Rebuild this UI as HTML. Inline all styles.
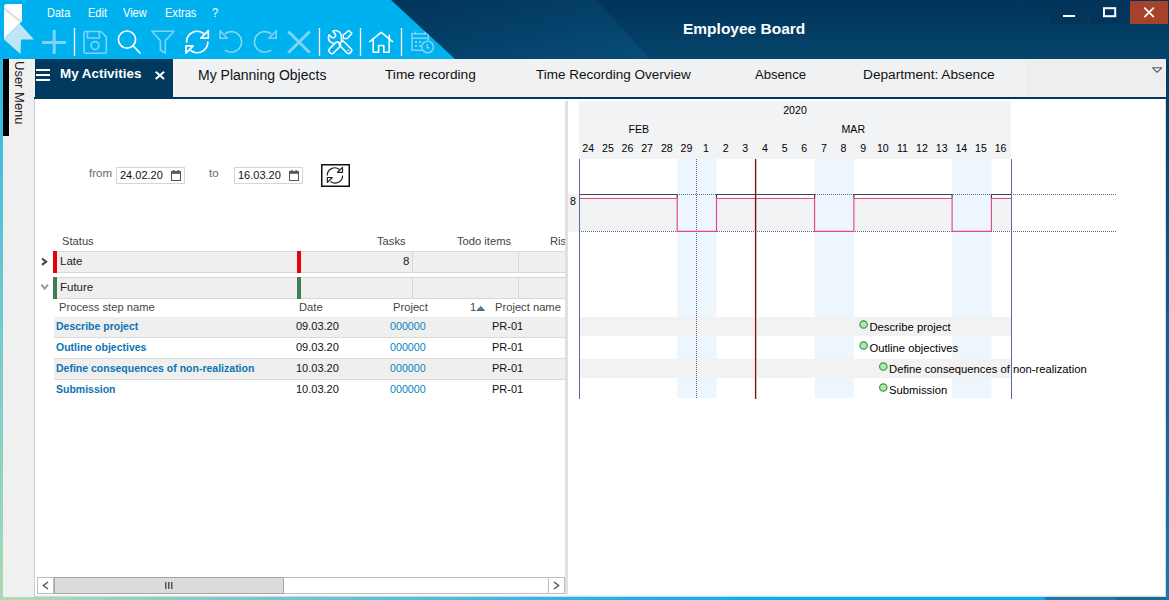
<!DOCTYPE html>
<html><head><meta charset="utf-8">
<style>
*{margin:0;padding:0;box-sizing:border-box}
html,body{width:1169px;height:600px;overflow:hidden}
body{position:relative;font-family:"Liberation Sans",sans-serif;background:linear-gradient(90deg,#b2dcb0 0%,#74c9cf 22%,#4cc0e0 36%,#12b3ee 55%,#00b0f0 68%,#00b0f0 89.3%,#1b7aaa 89.5%,#1b7aaa 95.3%,#156a9a 95.5%)}
.a{position:absolute}
.t{position:absolute;white-space:nowrap;line-height:1}
#leftedge{left:0;top:59px;width:3px;height:541px;background:linear-gradient(180deg,#2ab8e6 0%,#6ec8d0 45%,#a9d9b3 100%)}
#rightedge{left:1166px;top:59px;width:3px;height:541px;background:linear-gradient(180deg,#003a5e 0%,#0f5a8a 40%,#1a78a8 100%)}
#header{left:0;top:0;width:1169px;height:59px;background:#003a5e;overflow:hidden}
#win{left:3px;top:59px;width:1163px;height:538px;background:#fff}
</style></head><body>
<div id="leftedge" class="a"></div>
<div id="rightedge" class="a"></div>

<!-- HEADER -->
<svg class="a" style="left:0;top:0" width="1169" height="59">
  <defs>
    <linearGradient id="nv" x1="0" y1="0" x2="0" y2="1">
      <stop offset="0" stop-color="#01345a"/>
      <stop offset="1" stop-color="#05446c"/>
    </linearGradient>
    <linearGradient id="bd" x1="0" y1="0" x2="1" y2="1">
      <stop offset="0" stop-color="#02345a"/>
      <stop offset="1" stop-color="#074d78"/>
    </linearGradient>
    <linearGradient id="lg" x1="0" y1="0" x2="1" y2="1">
      <stop offset="0" stop-color="#cfcfcf"/>
      <stop offset="1" stop-color="#ffffff"/>
    </linearGradient>
    <clipPath id="cyanclip"><polygon points="0,0 391,0 455,59 0,59"/></clipPath>
  </defs>
  <rect x="0" y="0" width="1169" height="59" fill="url(#nv)"/>
  <polygon points="391,0 596,0 650,59 455,59" fill="url(#bd)"/>
  <polygon points="0,0 391,0 455,59 0,59" fill="#00b1f0"/>
  <!-- logo -->
  <path d="M4,7 Q4,4 7,4 H22 V21 L19.5,23.5 L4,38.5 Z" fill="#ffffff"/>
  <linearGradient id="lgr" gradientUnits="userSpaceOnUse" x1="12.9" y1="14.1" x2="10.9" y2="16.6"><stop offset="0" stop-color="#cdcdcd"/><stop offset="1" stop-color="#ffffff"/></linearGradient><polygon points="4,7 21.8,21.2 19.5,23.5 4,12" fill="url(#lgr)"/>
  <polygon points="4,38.5 19.5,23.5 34,39.5 21,39.5 20.5,54 4,39.5" fill="#bde6f7"/>
  <!-- plus (faded) -->
  <g stroke="#7fd4f6" stroke-width="3" fill="none">
    <line x1="42" y1="42.5" x2="66" y2="42.5"/>
    <line x1="54.2" y1="30" x2="54.2" y2="54"/>
  </g>
  <!-- separators -->
  <g stroke="#ffffff" stroke-width="1.3">
    <line x1="74.5" y1="28" x2="74.5" y2="56"/>
    <line x1="319.5" y1="28" x2="319.5" y2="56"/>
    <line x1="360.5" y1="28" x2="360.5" y2="56"/>
    <line x1="401.5" y1="28" x2="401.5" y2="56"/>
  </g>
  <!-- save faded -->
  <g stroke="#7fd4f6" stroke-width="1.6" fill="none" stroke-linejoin="round">
    <path d="M85.5,31.5 H101 L106.3,37 V52 Q106.3,53.2 105.1,53.2 H85.2 Q84,53.2 84,52 V33 Q84,31.5 85.5,31.5 Z"/>
    <path d="M87.5,31.5 V38 H99.4 V31.5"/>
    <circle cx="95" cy="45.5" r="3.9"/>
  </g>
  <!-- search -->
  <g stroke="#ffffff" stroke-width="1.7" fill="none" stroke-linecap="round">
    <circle cx="127" cy="39.6" r="8.6"/>
    <line x1="133.3" y1="46" x2="140" y2="53"/>
  </g>
  <!-- filter faded -->
  <path d="M152,31.2 H174 L165.3,40.8 V53.2 L160.4,50 V40.8 Z" stroke="#7fd4f6" stroke-width="1.6" fill="none" stroke-linejoin="round"/>
  <!-- refresh -->
  <g stroke="#ffffff" stroke-width="1.7" fill="none" stroke-linejoin="round" stroke-linecap="round">
    <path d="M186.6,42 A10.6,10.6 0 0 1 203.3,33.3"/>
    <path d="M207.8,42 A10.6,10.6 0 0 1 191.1,50.7"/>
    <path d="M208.3,30.7 V38.2 H200.8 Z"/>
    <path d="M186,53.2 V45.9 H193.2 Z"/>
  </g>
  <!-- undo faded -->
  <g stroke="#7fd4f6" stroke-width="1.6" fill="none" stroke-linejoin="round" stroke-linecap="round">
    <path d="M225.4,33.5 A10.3,10.3 0 1 1 225.4,50.3"/>
    <path d="M220,30.7 V38.2 H227.4 Z"/>
  </g>
  <!-- redo faded -->
  <g stroke="#7fd4f6" stroke-width="1.6" fill="none" stroke-linejoin="round" stroke-linecap="round">
    <path d="M270.7,33.5 A10.3,10.3 0 1 0 270.7,50.3"/>
    <path d="M276.2,30.7 V38.2 H268.8 Z"/>
  </g>
  <!-- X faded -->
  <g stroke="#7fd4f6" stroke-width="3" stroke-linecap="butt">
    <line x1="288.3" y1="31.5" x2="309.8" y2="52.8"/>
    <line x1="309.8" y1="31.5" x2="288.3" y2="52.8"/>
  </g>
  <!-- tools -->
  <g stroke="#ffffff" stroke-width="1.5" fill="none" stroke-linejoin="round">
    <path d="M332.6,31.3 L335.4,34.1 L335.6,36.3 L334,37.7 L331.8,37.4 L329,34.7 Q327.6,38.6 329.6,41.3 Q331.6,43.4 335,43.6 M332.6,31.3 Q336.3,29.6 339.4,32.1 Q342.2,35.2 341.2,39.6"/>
    <rect x="-6.6" y="-2.9" width="13.2" height="5.8" rx="2.2" transform="translate(334.6,47.8) rotate(-45)"/>
    <rect x="-7" y="-2.9" width="14" height="5.8" rx="2.2" transform="translate(345.6,47.4) rotate(45)"/>
    <path d="M343.3,38.5 L343.2,35 L348.8,30.6 L351.9,33.2 L347.4,38.5 Z"/>
  </g>
  <circle cx="342" cy="40.5" r="1.3" fill="#fff"/>
  <circle cx="348.3" cy="50.2" r="0.8" fill="#fff"/>
  <!-- home -->
  <g stroke="#ffffff" stroke-width="1.55" fill="none" stroke-linejoin="round" stroke-linecap="round">
    <path d="M369.8,41.6 L381.2,32.4 L392.6,41.6"/>
    <path d="M373.2,39 V52.2 H378.6 V45.5 H383.8 V52.2 H389.2 V39"/>
    <path d="M389.3,35.3 V38.5"/>
  </g>
  <!-- calendar faded (clipped) -->
  <g clip-path="url(#cyanclip)">
    <g stroke="#7fd4f6" stroke-width="1.5" fill="none">
      <path d="M422,50.3 H412 V33.8 H428.3 V40.5"/>
      <line x1="412" y1="38.3" x2="428.3" y2="38.3"/>
      <line x1="415.5" y1="31.5" x2="415.5" y2="34.5"/>
      <line x1="425" y1="31.5" x2="425" y2="34.5"/>
      <circle cx="427.6" cy="47" r="5.8"/>
      <path d="M427.3,44 V47.8 H429.5"/>
    </g>
    <g fill="#7fd4f6">
      <rect x="415" y="41" width="2" height="2"/><rect x="419" y="41" width="2" height="2"/>
      <rect x="415" y="45" width="2" height="2"/><rect x="419" y="45" width="2" height="2"/>
    </g>
  </g>
  <!-- window controls -->
  <rect x="1050" y="1" width="38" height="23" fill="#03355a"/>
  <rect x="1090" y="1" width="38" height="23" fill="#03355a"/>
  <rect x="1130" y="1" width="38" height="23" fill="#a5422b"/>
  <rect x="1063" y="15" width="12" height="2" fill="#fff"/>
  <rect x="1104" y="8.2" width="11.2" height="8" fill="none" stroke="#fff" stroke-width="2"/>
  <g stroke="#fff" stroke-width="1.8"><line x1="1144.3" y1="7.6" x2="1153.8" y2="17.2"/><line x1="1153.8" y1="7.6" x2="1144.3" y2="17.2"/></g>
</svg>
<div class="t" style="left:46.8px;top:7px;font-size:12px;color:#fff;transform:scaleX(0.92);transform-origin:0 0">Data</div>
<div class="t" style="left:87.5px;top:7px;font-size:12px;color:#fff;transform:scaleX(0.92);transform-origin:0 0">Edit</div>
<div class="t" style="left:123px;top:7px;font-size:12px;color:#fff;transform:scaleX(0.92);transform-origin:0 0">View</div>
<div class="t" style="left:165px;top:7px;font-size:12px;color:#fff;transform:scaleX(0.92);transform-origin:0 0">Extras</div>
<div class="t" style="left:212px;top:7px;font-size:12px;color:#fff;transform:scaleX(0.92);transform-origin:0 0">?</div>
<div class="t" style="left:683px;top:21px;font-size:15.5px;font-weight:bold;color:#fff">Employee Board</div>

<!-- WINDOW BODY -->
<div class="a" style="left:3px;top:59px;width:1163px;height:538px;background:#fff"></div>
<!-- user menu sidebar -->
<div class="a" style="left:3px;top:59px;width:32px;height:538px;background:#f0f0f0"></div>
<div class="a" style="left:3px;top:59px;width:6px;height:77px;background:#000"></div>
<div class="t" style="left:11px;top:61px;font-size:13px;color:#222;transform-origin:0 0;transform:translate(15px,0) rotate(90deg)">User Menu</div>
<div class="a" style="left:34px;top:99px;width:1px;height:498px;background:#c9cde0"></div>
<!-- tab bar -->
<div class="a" style="left:35px;top:59px;width:1131px;height:38px;background:#f0f1f3"></div>
<div class="a" style="left:34px;top:97px;width:1132px;height:2px;background:#013a5e"></div>
<div class="a" style="left:35px;top:59px;width:138px;height:39px;background:#013a5e"></div>
<div class="a" style="left:36px;top:69px;width:14px;height:2px;background:#fff"></div>
<div class="a" style="left:36px;top:74px;width:14px;height:2px;background:#fff"></div>
<div class="a" style="left:36px;top:79px;width:14px;height:2px;background:#fff"></div>
<div class="t" style="left:60px;top:67px;font-size:13.4px;font-weight:bold;color:#fff">My Activities</div>
<svg class="a" style="left:150px;top:66px" width="20" height="20"><g stroke="#fff" stroke-width="2"><line x1="5.7" y1="5.7" x2="14.1" y2="12.9"/><line x1="14.1" y1="5.7" x2="5.7" y2="12.9"/></g></svg>
<div class="t" style="left:198px;top:68px;font-size:14px;color:#111">My Planning Objects</div>
<div class="t" style="left:385px;top:68px;font-size:13.7px;color:#111">Time recording</div>
<div class="t" style="left:536px;top:68px;font-size:13.5px;color:#111">Time Recording Overview</div>
<div class="t" style="left:755px;top:68px;font-size:13.1px;color:#111">Absence</div>
<div class="t" style="left:863px;top:68px;font-size:13.7px;color:#111">Department: Absence</div>
<div class="a" style="left:1026px;top:59px;width:140px;height:38px;background:#eeeeee"></div>
<svg class="a" style="left:1150px;top:64px" width="14" height="12"><path d="M2.6,3.8 H11.6 L7.1,8.3 Z" fill="none" stroke="#505560" stroke-width="1.05" stroke-linejoin="round"/></svg>


<!-- LEFT PANEL -->
<div class="t" style="left:89px;top:168px;font-size:11.5px;color:#666">from</div>
<div class="a" style="left:116px;top:167px;width:69px;height:17px;border:1px solid #d5d5d5;background:#fff"></div>
<div class="t" style="left:120px;top:170px;font-size:11px;color:#111">24.02.20</div>
<div class="t" style="left:209px;top:168px;font-size:11.5px;color:#666">to</div>
<div class="a" style="left:234px;top:167px;width:69px;height:17px;border:1px solid #d5d5d5;background:#fff"></div>
<div class="t" style="left:238px;top:170px;font-size:11px;color:#111">16.03.20</div>
<svg class="a" style="left:170px;top:169px" width="13" height="14"><rect x="1.5" y="3" width="9" height="8.5" fill="none" stroke="#555" stroke-width="1"/><rect x="1" y="2.2" width="10" height="2.6" fill="#555"/><rect x="2.4" y="1.2" width="2.6" height="2" rx="0.9" fill="#555"/><rect x="7" y="1.2" width="2.6" height="2" rx="0.9" fill="#555"/></svg>
<svg class="a" style="left:288px;top:169px" width="13" height="14"><rect x="1.5" y="3" width="9" height="8.5" fill="none" stroke="#555" stroke-width="1"/><rect x="1" y="2.2" width="10" height="2.6" fill="#555"/><rect x="2.4" y="1.2" width="2.6" height="2" rx="0.9" fill="#555"/><rect x="7" y="1.2" width="2.6" height="2" rx="0.9" fill="#555"/></svg>
<svg class="a" style="left:321px;top:164px" width="29" height="23"><rect x="0.75" y="0.75" width="27.5" height="21.5" fill="#fff" stroke="#111" stroke-width="1.5"/></svg>
<svg class="a" style="left:321px;top:164px" width="29" height="23"><g stroke="#222" stroke-width="1.2" fill="none" stroke-linejoin="round">
<path d="M327.3,175.5 A7.5,7.5 0 0 1 339.5,169.5" transform="translate(-321,-164)"/>
<path d="M342.6,175.5 A7.5,7.5 0 0 1 330.5,181.5" transform="translate(-321,-164)"/>
<path d="M342.5,167.4 V172.3 H337.5 Z" transform="translate(-321,-164)"/>
<path d="M327.4,182.4 V177.5 H332.4 Z" transform="translate(-321,-164)"/>
</g></svg>

<!-- group table -->
<div class="t" style="left:62px;top:236px;font-size:11.2px;color:#444">Status</div>
<div class="t" style="left:377px;top:236px;font-size:11.2px;color:#444">Tasks</div>
<div class="t" style="left:457px;top:236px;font-size:11.2px;color:#444">Todo items</div>
<div class="t" style="left:550px;top:236px;font-size:11.2px;color:#444">Ris</div>
<!-- Late row -->
<div class="a" style="left:57px;top:251px;width:508px;height:22px;background:#efefef;border-top:1px solid #d8d8d8;border-bottom:1px solid #d8d8d8"></div>
<div class="a" style="left:53px;top:251px;width:4px;height:22px;background:#e8000b"></div>
<div class="a" style="left:297px;top:251px;width:4px;height:22px;background:#e8000b"></div>
<div class="a" style="left:412px;top:252px;width:1px;height:20px;background:#d8d8d8"></div>
<div class="a" style="left:518px;top:252px;width:1px;height:20px;background:#d8d8d8"></div>
<div class="t" style="left:60px;top:256px;font-size:11.5px;color:#222">Late</div>
<div class="t" style="left:403px;top:256px;font-size:11.5px;color:#222">8</div>
<svg class="a" style="left:38px;top:255px" width="12" height="14"><path d="M4,3.5 L8.2,6.7 L4,9.9" fill="none" stroke="#484848" stroke-width="2.1"/></svg>
<!-- Future row -->
<div class="a" style="left:57px;top:277px;width:508px;height:22px;background:#efefef;border-top:1px solid #d8d8d8;border-bottom:1px solid #d8d8d8"></div>
<div class="a" style="left:53px;top:277px;width:4px;height:22px;background:#3d7f50"></div>
<div class="a" style="left:297px;top:277px;width:4px;height:22px;background:#3d7f50"></div>
<div class="a" style="left:412px;top:278px;width:1px;height:20px;background:#d8d8d8"></div>
<div class="a" style="left:518px;top:278px;width:1px;height:20px;background:#d8d8d8"></div>
<div class="t" style="left:60px;top:282px;font-size:11.5px;color:#222">Future</div>
<svg class="a" style="left:38px;top:281px" width="12" height="14"><path d="M3.4,3.6 L6.7,7.6 L10,3.6" fill="none" stroke="#9a9a9a" stroke-width="2.1"/></svg>
<!-- process step header -->
<div class="t" style="left:59px;top:302px;font-size:11.2px;color:#444">Process step name</div>
<div class="t" style="left:299px;top:302px;font-size:11.2px;color:#444">Date</div>
<div class="t" style="left:393px;top:302px;font-size:11.2px;color:#444">Project</div>
<div class="t" style="left:470px;top:302px;font-size:11.2px;color:#444">1</div>
<svg class="a" style="left:476px;top:303px" width="10" height="10"><path d="M1,7.5 H8.5 L4.75,3.5 Z" fill="#2a8ad0" stroke="#222" stroke-width="0.6"/></svg>
<div class="t" style="left:495px;top:302px;font-size:11.2px;color:#444">Project name</div>
<!-- data rows -->
<div class="a" style="left:54px;top:317px;width:511px;height:21px;background:#efefef;border-bottom:1px solid #dadada"></div>
<div class="a" style="left:54px;top:338px;width:511px;height:21px;background:#fff;border-bottom:1px solid #dadada"></div>
<div class="a" style="left:54px;top:359px;width:511px;height:21px;background:#efefef;border-bottom:1px solid #dadada"></div>
<div class="t" style="left:56px;top:321px;font-size:10.5px;font-weight:bold;color:#0e74b2">Describe project</div>
<div class="t" style="left:56px;top:342px;font-size:10.5px;font-weight:bold;color:#0e74b2">Outline objectives</div>
<div class="t" style="left:56px;top:363px;font-size:10.5px;font-weight:bold;color:#0e74b2">Define consequences of non-realization</div>
<div class="t" style="left:56px;top:384px;font-size:10.5px;font-weight:bold;color:#0e74b2">Submission</div>
<div class="t" style="left:296px;top:321px;font-size:11px;color:#111">09.03.20</div>
<div class="t" style="left:296px;top:342px;font-size:11px;color:#111">09.03.20</div>
<div class="t" style="left:296px;top:363px;font-size:11px;color:#111">10.03.20</div>
<div class="t" style="left:296px;top:384px;font-size:11px;color:#111">10.03.20</div>
<div class="t" style="left:390px;top:321px;font-size:10.7px;color:#0a84c4">000000</div>
<div class="t" style="left:390px;top:342px;font-size:10.7px;color:#0a84c4">000000</div>
<div class="t" style="left:390px;top:363px;font-size:10.7px;color:#0a84c4">000000</div>
<div class="t" style="left:390px;top:384px;font-size:10.7px;color:#0a84c4">000000</div>
<div class="t" style="left:492px;top:321px;font-size:11px;color:#111">PR-01</div>
<div class="t" style="left:492px;top:342px;font-size:11px;color:#111">PR-01</div>
<div class="t" style="left:492px;top:363px;font-size:11px;color:#111">PR-01</div>
<div class="t" style="left:492px;top:384px;font-size:11px;color:#111">PR-01</div>

<!-- scrollbar -->
<div class="a" style="left:37px;top:577px;width:528px;height:17px;border:1px solid #bdbdbd;background:#fff"></div>
<div class="a" style="left:53px;top:577px;width:1px;height:17px;background:#bdbdbd"></div>
<div class="a" style="left:548px;top:577px;width:1px;height:17px;background:#bdbdbd"></div>
<div class="a" style="left:54px;top:577px;width:230px;height:17px;border:1px solid #a5a5a5;background:#dcdcdc"></div>
<svg class="a" style="left:37px;top:577px" width="528" height="17">
<path d="M11,5 L6.3,8.5 L11,12" fill="none" stroke="#555" stroke-width="1.4"/>
<path d="M517,5 L521.7,8.5 L517,12" fill="none" stroke="#555" stroke-width="1.4"/>
<rect x="128" y="5" width="1.5" height="7" fill="#555"/><rect x="131" y="5" width="1.5" height="7" fill="#555"/><rect x="134" y="5" width="1.5" height="7" fill="#555"/>
</svg>

<div class="a" style="left:1165px;top:99px;width:1px;height:498px;background:#dcd8e0"></div>
<div class="a" style="left:35px;top:596px;width:1131px;height:1px;background:#dcd8de"></div>
<div class="a" style="left:35px;top:595px;width:1130px;height:1px;background:#f3f2f4"></div>
<!-- splitter -->
<div class="a" style="left:565px;top:101px;width:3px;height:493px;background:#e3dde6"></div>
<!-- GANTT -->
<svg class="a" style="left:568px;top:99px" width="598" height="495"><g transform="translate(-568,-99)" font-family="Liberation Sans" >
<rect x="579" y="101" width="432" height="58" fill="#f2f3f5"/>
<text x="795" y="114" font-size="10.6" text-anchor="middle" fill="#000">2020</text>
<text x="628.5" y="133" font-size="10.6" fill="#000">FEB</text>
<text x="841.5" y="133" font-size="10.6" fill="#000">MAR</text>
<text x="588.2" y="152" font-size="10.6" text-anchor="middle" fill="#000">24</text>
<text x="607.9" y="152" font-size="10.6" text-anchor="middle" fill="#000">25</text>
<text x="627.5" y="152" font-size="10.6" text-anchor="middle" fill="#000">26</text>
<text x="647.1" y="152" font-size="10.6" text-anchor="middle" fill="#000">27</text>
<text x="666.8" y="152" font-size="10.6" text-anchor="middle" fill="#000">28</text>
<text x="686.4" y="152" font-size="10.6" text-anchor="middle" fill="#000">29</text>
<text x="706.0" y="152" font-size="10.6" text-anchor="middle" fill="#000">1</text>
<text x="725.7" y="152" font-size="10.6" text-anchor="middle" fill="#000">2</text>
<text x="745.3" y="152" font-size="10.6" text-anchor="middle" fill="#000">3</text>
<text x="764.9" y="152" font-size="10.6" text-anchor="middle" fill="#000">4</text>
<text x="784.6" y="152" font-size="10.6" text-anchor="middle" fill="#000">5</text>
<text x="804.2" y="152" font-size="10.6" text-anchor="middle" fill="#000">6</text>
<text x="823.9" y="152" font-size="10.6" text-anchor="middle" fill="#000">7</text>
<text x="843.5" y="152" font-size="10.6" text-anchor="middle" fill="#000">8</text>
<text x="863.1" y="152" font-size="10.6" text-anchor="middle" fill="#000">9</text>
<text x="882.8" y="152" font-size="10.6" text-anchor="middle" fill="#000">10</text>
<text x="902.4" y="152" font-size="10.6" text-anchor="middle" fill="#000">11</text>
<text x="922.0" y="152" font-size="10.6" text-anchor="middle" fill="#000">12</text>
<text x="941.7" y="152" font-size="10.6" text-anchor="middle" fill="#000">13</text>
<text x="961.3" y="152" font-size="10.6" text-anchor="middle" fill="#000">14</text>
<text x="980.9" y="152" font-size="10.6" text-anchor="middle" fill="#000">15</text>
<text x="1000.6" y="152" font-size="10.6" text-anchor="middle" fill="#000">16</text>
<rect x="677.2" y="159" width="39.3" height="239" fill="#eef6fd"/>
<rect x="814.6" y="159" width="39.3" height="239" fill="#eef6fd"/>
<rect x="952.1" y="159" width="39.3" height="239" fill="#eef6fd"/>
<rect x="568" y="194" width="11" height="38" fill="#f2f3f5"/>
<text x="573" y="205" font-size="10.6" text-anchor="middle" fill="#000">8</text>
<rect x="579.0" y="198.5" width="98.2" height="32.5" fill="#f2f3f5"/>
<rect x="716.5" y="198.5" width="98.2" height="32.5" fill="#f2f3f5"/>
<rect x="853.9" y="198.5" width="98.2" height="32.5" fill="#f2f3f5"/>
<rect x="991.4" y="198.5" width="19.6" height="32.5" fill="#f2f3f5"/>
<rect x="580" y="317" width="431" height="19" fill="#f2f2f2"/><rect x="754" y="317" width="3" height="19" fill="#fff"/>
<rect x="580" y="359" width="431" height="19" fill="#f2f2f2"/><rect x="754" y="359" width="3" height="19" fill="#fff"/>
<g stroke="#5a6a9a" stroke-width="1" stroke-dasharray="1,1">
<line x1="579" y1="194.5" x2="1117" y2="194.5"/>
<line x1="579" y1="231.5" x2="1117" y2="231.5"/>
<line x1="696.5" y1="159" x2="696.5" y2="399"/>
</g>
<path d="M580,194.5 H677.2 V198" fill="none" stroke="#444" stroke-width="1.2"/>
<path d="M716.5,198 V194.5 H814.6 V198" fill="none" stroke="#444" stroke-width="1.2"/>
<path d="M853.9,198 V194.5 H952.1 V198" fill="none" stroke="#444" stroke-width="1.2"/>
<path d="M991.4,198 V194.5 H1011" fill="none" stroke="#444" stroke-width="1.2"/>
<path d="M579.5,198.5 H677.2 V231.3 H716.5 V198.5 H814.6 V231.3 H853.9 V198.5 H952.1 V231.3 H991.4 V198.5 H1011" fill="none" stroke="#e4468e" stroke-width="1.15"/>
<line x1="579.5" y1="159" x2="579.5" y2="399" stroke="#5a6a90" stroke-width="1"/>
<line x1="1011.5" y1="159" x2="1011.5" y2="399" stroke="#5a6a90" stroke-width="1"/>
<line x1="755.6" y1="159" x2="755.6" y2="399" stroke="#8a0a18" stroke-width="1.4"/>
<circle cx="863.6" cy="324.5" r="3.7" fill="#b4e6b4" stroke="#2f9a3a" stroke-width="1.15"/>
<text x="869.4" y="331.0" font-size="11.25" fill="#000">Describe project</text>
<circle cx="863.6" cy="345.5" r="3.7" fill="#b4e6b4" stroke="#2f9a3a" stroke-width="1.15"/>
<text x="869.4" y="352.0" font-size="11.25" fill="#000">Outline objectives</text>
<circle cx="883.3" cy="366.5" r="3.7" fill="#b4e6b4" stroke="#2f9a3a" stroke-width="1.15"/>
<text x="889.1" y="373.0" font-size="11.25" fill="#000">Define consequences of non-realization</text>
<circle cx="883.3" cy="387.5" r="3.7" fill="#b4e6b4" stroke="#2f9a3a" stroke-width="1.15"/>
<text x="889.1" y="394.0" font-size="11.25" fill="#000">Submission</text>
</g></svg>
</body></html>
